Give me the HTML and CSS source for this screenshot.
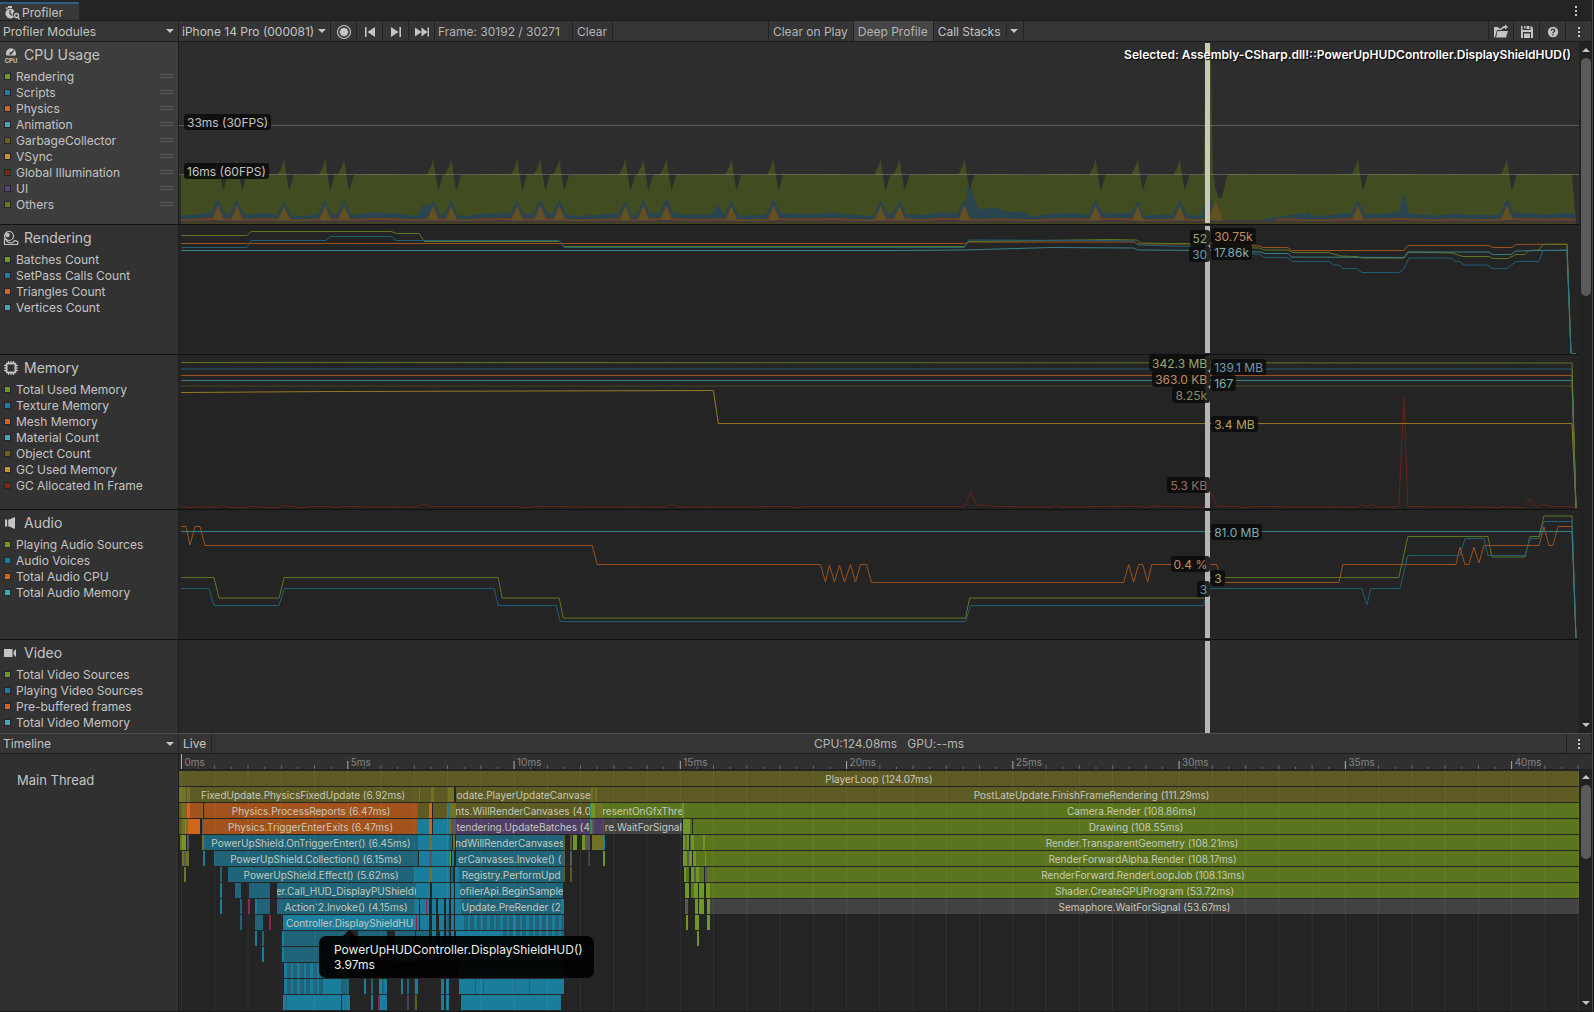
FILE: index.html
```html
<!DOCTYPE html>
<html lang="en">
<head>
    <meta charset="UTF-8">
    <meta name="viewport" content="width=device-width, initial-scale=1.0">
    <title>Profiler</title>
    <link rel="stylesheet" href="styles.css">
</head>
<body>
    <div class="window">
        <header class="tab-bar">
            <div class="tab">
                <svg class="icon" viewBox="0 0 16 16"><path d="M4 1h4v2H4zM1.500 3l1.500-1 1 1-1.500 1.500zM6 3.500a5 5 0 0 1 4.500 3C9 7 8.500 9 9 11l1 1A5 5 0 1 1 6 3.500z"/><path d="M6 5v3.500l2 2" fill="none" stroke="#383838" stroke-width="1.200"/><circle cx="12.500" cy="10.500" r="2" fill="none" stroke="#c4c4c4" stroke-width="1.300"/><path d="M13.500 12l2 2.500" stroke="#c4c4c4" stroke-width="1.300"/></svg>
                <span>Profiler</span>
            </div>
            <button class="kebab" aria-label="Window menu"><i></i><i></i><i></i></button>
        </header>

        <nav class="toolbar">
            <div class="select-box modules-select">
                <select aria-label="Profiler Modules"><option>Profiler Modules</option></select>
            </div>
            <div class="select-box device-select">
                <select aria-label="Target"><option>iPhone 14 Pro (000081)</option></select>
            </div>
            <button class="tool icon-tool" aria-label="Record"><svg class="icon" viewBox="0 0 16 16"><circle cx="8" cy="8" r="6.500" fill="none" stroke="#c4c4c4" stroke-width="1.100"/><circle cx="8" cy="8" r="4.300"/></svg></button>
            <button class="tool icon-tool" aria-label="Previous frame"><svg class="icon" viewBox="0 0 16 16"><path d="M3 3h1.600v10H3zM13 3v10L5.500 8z"/></svg></button>
            <button class="tool icon-tool" aria-label="Next frame"><svg class="icon" viewBox="0 0 16 16"><path d="M11.400 3H13v10h-1.600zM3 3v10l7.500-5z"/></svg></button>
            <button class="tool icon-tool" aria-label="Last frame"><svg class="icon" viewBox="0 0 16 16"><path d="M1 3.500v9L7.500 8zM7.500 3.500v9L13.500 8zM13.500 3.500H15v9h-1.500z"/></svg></button>
            <span class="tool frame">Frame: 30192 / 30271</span>
            <button class="tool">Clear</button>
            <span class="spacer"></span>
            <button class="tool first">Clear on Play</button>
            <button class="tool pressed" aria-pressed="true">Deep Profile</button>
            <button class="tool stacks">Call Stacks</button>
            <button class="tool stacks-menu" aria-label="Call stack options"><b class="arrow down"></b></button>
            <span class="spacer wide"></span>
            <button class="tool icon-tool first" aria-label="Load"><svg class="icon" viewBox="0 0 16 16"><path d="M1 3h4l1 1.500h3V6H4L2 13.500H1zM4.500 7H15l-2 6.500H3zM8 5.500C8.500 3 10 2 12 2V.500L15 3l-3 2.500V4c-1.500 0-2.500.500-3 1.500z"/></svg></button>
            <button class="tool icon-tool" aria-label="Save"><svg class="icon" viewBox="0 0 16 16"><path d="M2 2h1.500v4h8V2H12l2 2v10h-2V8H4v6H2zM5 2h1.500v2.500H5zM7.500 2h3v3h-3zM5 9.500h6V14H5z"/></svg></button>
            <button class="tool icon-tool" aria-label="Help"><svg class="icon" viewBox="0 0 16 16"><circle cx="8" cy="8" r="5.200"/><path d="M6.300 6.800C6.300 4.500 9.800 4.600 9.700 6.600 9.600 7.800 8 7.800 8 9.200M8 10.200v1.300" fill="none" stroke="#353535" stroke-width="1.400"/></svg></button>
            <button class="tool icon-tool kebab" aria-label="Profiler menu"><i></i><i></i><i></i></button>
        </nav>

        <main class="modules">
            <div class="module-list">
                <section class="module cpu">
                    <div class="legend">
                        <h2><svg class="icon" viewBox="0 0 16 16"><path d="M3.500 8.500a5 5 0 1 1 9 0z"/><path d="M8 6.500l3-3" stroke="#3d3d3d" stroke-width="1.200"/><circle cx="7.700" cy="6.500" r="1.300" fill="#3d3d3d"/><text x="8" y="15.500" text-anchor="middle" class="icon-text">CPU</text></svg>CPU Usage</h2>
                        <label><input type="checkbox" class="green" checked>Rendering<i class="grip"></i></label>
                        <label><input type="checkbox" class="blue" checked>Scripts<i class="grip"></i></label>
                        <label><input type="checkbox" class="orange" checked>Physics<i class="grip"></i></label>
                        <label><input type="checkbox" class="cyan" checked>Animation<i class="grip"></i></label>
                        <label><input type="checkbox" class="olive" checked>GarbageCollector<i class="grip"></i></label>
                        <label><input type="checkbox" class="yellow" checked>VSync<i class="grip"></i></label>
                        <label><input type="checkbox" class="red" checked>Global Illumination<i class="grip"></i></label>
                        <label><input type="checkbox" class="violet" checked>UI<i class="grip"></i></label>
                        <label><input type="checkbox" class="moss" checked>Others<i class="grip"></i></label>
                    </div>
                    <div class="chart">
                        <svg class="plot" id="cpu-plot" viewBox="179 42 1399 182" preserveAspectRatio="none"></svg>
                        <span class="fps fps-30">33ms (30FPS)</span>
                        <span class="fps fps-60">16ms (60FPS)</span>
                        <div class="marker"></div>
                        <span class="selected">Selected: Assembly-CSharp.dll!::PowerUpHUDController.DisplayShieldHUD()</span>
                    </div>
                </section>

                <section class="module rendering">
                    <div class="legend">
                        <h2><svg class="icon" viewBox="0 0 16 16"><circle cx="6" cy="6" r="4.500" fill="none" stroke="#c4c4c4" stroke-width="1.200"/><circle cx="4.500" cy="5" r="2.200"/><path d="M1.500 9v5.500h13l.500-2.500c-2-1-3.500-2-4-1l-1 1.500c-3 1-6 0-7-3.500z" fill="none" stroke="#c4c4c4" stroke-width="1.200"/></svg>Rendering</h2>
                        <label><input type="checkbox" class="green" checked>Batches Count</label>
                        <label><input type="checkbox" class="blue" checked>SetPass Calls Count</label>
                        <label><input type="checkbox" class="orange" checked>Triangles Count</label>
                        <label><input type="checkbox" class="cyan" checked>Vertices Count</label>
                    </div>
                    <div class="chart">
                        <svg class="plot" viewBox="179 225 1399 129" preserveAspectRatio="none">
                            <polyline class="line-orange" points="181,243.500 964,243.500 968,242 1133,242 1137,244 1205,244 1210,243 1259,246 1262,247.500 1287,247.500 1291,250.500 1403,250.500 1407,245.500 1488,245.500 1492,247.500 1511,247.500 1515,244.500 1566,244 1570,353"/>
                            <polyline class="line-green" points="181,235.500 247,235.500 251,231.500 391,231.500 396,233.500 419,233.500 424,241.500 559,241.500 564,246.500 964,246.500 968,241.500 1110,239.500 1136,240 1140,243 1205,244 1210,247 1259,248 1263,250 1287,250 1292,252.500 1328,252.500 1340,256 1356,256.500 1361,258 1403,258 1407,252 1451,253 1462,256.500 1488,256.500 1492,258.500 1507,258.500 1515,254.500 1524,254.500 1528,250.500 1538,250 1542,244.500 1566,244.500 1570,353"/>
                            <polyline class="line-blue" points="181,247.500 247,247.500 251,240.500 326,240.500 330,236.500 391,236.500 396,240.500 559,240.500 564,247.500 964,247.500 968,240 1110,240.500 1133,241 1137,245 1205,247 1210,250 1259,254.500 1263,257.500 1287,257.500 1291,261.500 1328,261.500 1333,265 1338,265 1342,268.500 1356,268.500 1361,272.500 1398,272.500 1403,269 1408,258 1450,258 1454,261 1459,261.500 1463,265 1487,265 1491,268.500 1506,268.500 1515,261.500 1538,261.500 1542,250.500 1566,250.500 1570,353"/>
                            <polyline class="line-cyan" points="181,250.500 900,250.500 964,250 1050,247.500 1133,248 1137,250 1210,250.500 1260,252 1264,253.500 1287,253.500 1291,257 1403,257.500 1408,252 1488,252 1492,254.500 1510,254.500 1515,251 1566,250 1570,353.500 1575,353.500"/>
                        </svg>
                        <div class="marker" data-values="rendering"></div>
                    </div>
                </section>

                <section class="module memory">
                    <div class="legend">
                        <h2><svg class="icon" viewBox="0 0 16 16"><rect x="3.500" y="3.500" width="9" height="9" rx="1" fill="none" stroke="#c4c4c4" stroke-width="2"/><path d="M5.500 1v2M8 1v2M10.500 1v2M5.500 13v2M8 13v2M10.500 13v2M1 5.500h2M1 8h2M1 10.500h2M13 5.500h2M13 8h2M13 10.500h2" stroke="#c4c4c4" stroke-width="1.200"/></svg>Memory</h2>
                        <label><input type="checkbox" class="green" checked>Total Used Memory</label>
                        <label><input type="checkbox" class="blue" checked>Texture Memory</label>
                        <label><input type="checkbox" class="orange" checked>Mesh Memory</label>
                        <label><input type="checkbox" class="cyan" checked>Material Count</label>
                        <label><input type="checkbox" class="olive" checked>Object Count</label>
                        <label><input type="checkbox" class="yellow" checked>GC Used Memory</label>
                        <label><input type="checkbox" class="red" checked>GC Allocated In Frame</label>
                    </div>
                    <div class="chart">
                        <svg class="plot" viewBox="179 355 1399 154" preserveAspectRatio="none">
                            <polyline class="line-red" points="181,506.500 186,506.500 190,508 195,506.500 218,507 223,505 228,507 245,508 251,506 275,508 284,505.500 298,507 303,508 308,506.500 330,506.500 336,508 341,506.500 415,507 424,504 430,506.500 520,506.500 526,508 532,506.500 664,507 671,504.500 678,507 790,506.500 796,508 802,506.500 964,506.500 970,492 976,505 1000,506.500 1050,507 1056,505.500 1062,507 1140,506 1146,508 1151,506 1203,507 1210,492 1216,506 1240,506.500 1244,508 1250,506.500 1355,507 1361,505 1366,507 1371,504.500 1378,507 1398,506.500 1403,397 1407,506.500 1460,507 1464,505 1468,507 1491,507 1496,508 1502,506.500 1524,507.500 1529,499 1534,506 1538,506 1543,504.500 1550,506.500 1571,506.500 1575,508"/>
                            <polyline class="line-olive" points="181,386 1571,386 1575,508"/>
                            <polyline class="line-yellow" points="181,392.500 330,391.500 713,390.500 718,423.500 1571,423.500 1575,508"/>
                            <polyline class="line-blue" points="181,369 1571,369 1575,508"/>
                            <polyline class="line-orange" points="181,375.500 1571,375.500 1575,508"/>
                            <polyline class="line-cyan" points="181,380.500 1571,380.500 1575,508"/>
                            <polyline class="line-green" points="181,362.500 1571,363 1575,508"/>
                        </svg>
                        <div class="marker" data-values="memory"></div>
                    </div>
                </section>

                <section class="module audio">
                    <div class="legend">
                        <h2><svg class="icon" viewBox="0 0 16 16"><path d="M2 4.500h2.200v7H2zM5.200 4.500h1L12 2v12l-5.800-2.500h-1z"/></svg>Audio</h2>
                        <label><input type="checkbox" class="green" checked>Playing Audio Sources</label>
                        <label><input type="checkbox" class="blue" checked>Audio Voices</label>
                        <label><input type="checkbox" class="orange" checked>Total Audio CPU</label>
                        <label><input type="checkbox" class="cyan" checked>Total Audio Memory</label>
                    </div>
                    <div class="chart">
                        <svg class="plot" viewBox="179 510 1399 129" preserveAspectRatio="none">
                            <polyline class="line-orange" points="181,526.500 186,526.500 190,545 195,526.500 200,526.500 205,545.500 592,545.500 597,564.500 820,564.500 825,582 829,565 834,582 839,565 844,582 850,564.500 855,582 860,564.500 866,564.500 871,582.500 1123,582.500 1128,564.500 1133,582 1138,564.500 1142,564.500 1147,582 1151,564.500 1216,564.500 1221,582.500 1338,582.500 1342,564.500 1455,564.500 1459,547 1464,564.500 1468,564.500 1473,547 1478,563 1483,545.500 1538,545.500 1543,527 1548,545.500 1552,545.500 1557,526.500 1571,526.500 1575,638"/>
                            <polyline class="line-green" points="181,577.500 214,577.500 219,598 279,598 284,577.500 498,577.500 502,598 559,598 563,618 965,618 969,598 1203,598 1207,577.500 1398,577.500 1407,536.500 1487,536.500 1491,557 1524,557 1529,536.500 1538,536.500 1543,516 1571,516 1575,638"/>
                            <polyline class="line-blue" points="181,588.500 209,588.500 214,605.500 279,605.500 284,588.500 494,588.500 498,605.500 556,605.500 560,621.500 965,621.500 970,605.500 1203,605.500 1207,588.500 1361,588.500 1366,605 1370,588.500 1399,588.500 1407,555.500 1459,555.500 1464,538.500 1483,538.500 1487,555.500 1524,555.500 1529,538.500 1538,538.500 1543,521.500 1571,521.500 1575,638"/>
                            <polyline class="line-cyan" points="181,531.500 1571,531.500 1575,638"/>
                        </svg>
                        <div class="marker" data-values="audio"></div>
                    </div>
                </section>

                <section class="module video">
                    <div class="legend">
                        <h2><svg class="icon" viewBox="0 0 16 16"><path d="M1 4h8.500v8H1zM10.500 6.500L13 4v8l-2.500-2.500z"/></svg>Video</h2>
                        <label><input type="checkbox" class="green" checked>Total Video Sources</label>
                        <label><input type="checkbox" class="blue" checked>Playing Video Sources</label>
                        <label><input type="checkbox" class="orange" checked>Pre-buffered frames</label>
                        <label><input type="checkbox" class="cyan" checked>Total Video Memory</label>
                    </div>
                    <div class="chart"><div class="marker"></div></div>
                </section>
            </div>
            <div class="scrollbar modules-scroll"><b class="arrow up"></b><i class="thumb"></i><b class="arrow down"></b></div>
        </main>

        <nav class="toolbar details-bar">
            <div class="select-box modules-select">
                <select aria-label="Details view"><option>Timeline</option></select>
            </div>
            <button class="tool">Live</button>
            <span class="timing">CPU:124.08ms&nbsp;&nbsp; GPU:--ms</span>
            <button class="tool icon-tool first kebab" aria-label="Timeline menu"><i></i><i></i><i></i></button>
        </nav>

        <section class="timeline">
            <div class="threads">Main Thread</div>
            <div class="track">
                <svg class="ruler" id="ruler"></svg>
                <div class="flame">
                    <svg class="gridlines" id="gridlines"></svg>
                    <div id="flame-rows"></div>
                    <div class="tooltip">PowerUpHUDController.DisplayShieldHUD()<br>3.97ms</div>
                </div>
            </div>
            <div class="scroll-column">
                <div class="scrollbar timeline-scroll"><b class="arrow up"></b><i class="thumb"></i><b class="arrow down"></b></div>
            </div>
        </section>
    </div>
    <script src="script.js"></script>
</body>
</html>
```
FILE: styles.css
```css
* {
    box-sizing: border-box;
}
body {
    margin: 0;
    height: 100vh;
    padding-right: 1px;
    background: #141414;
    color: #c4c4c4;
    font: 12px/16px Inter, "Liberation Sans", sans-serif;
    overflow: hidden;
}
.window {
    display: flex;
    flex-direction: column;
    height: 100%;
    background: #242424;
    border-right: 1px solid #484848;
    border-bottom: 1px solid #191919;
}
button,
select {
    font: inherit;
    color: inherit;
    background: none;
    border: none;
    border-radius: 0;
    padding: 0;
    margin: 0;
}
.icon {
    width: 16px;
    height: 16px;
    fill: #c4c4c4;
    flex: none;
}
.icon-text {
    font-size: 6px;
    font-weight: 700;
}

/* tab bar */
.tab-bar {
    display: flex;
    justify-content: space-between;
    height: 21px;
    padding-top: 2px;
    border-bottom: 1px solid #1e1e1e;
}
.tab {
    display: flex;
    align-items: center;
    gap: 2px;
    width: 79px;
    padding: 2px 0 0 4px;
    background: #383838;
    border-top: 2px solid #2c5d87;
}
.kebab {
    display: flex;
    flex-direction: column;
    align-items: center;
    justify-content: center;
    gap: 2px;
    width: 32px;
}
.kebab i {
    width: 2px;
    height: 2px;
    background: #c4c4c4;
}

/* toolbars */
.toolbar {
    display: flex;
    flex: none;
    height: 21px;
    background: #353535;
    border-bottom: 1px solid #1c1c1c;
}
.select-box {
    position: relative;
    border-right: 1px solid #222;
}
.select-box select {
    appearance: none;
    width: 100%;
    height: 20px;
    padding: 2px 14px 0 3px;
}
.select-box::after {
    content: "";
    position: absolute;
    right: 4px;
    top: 8px;
    border: 4px solid transparent;
    border-top-color: #c4c4c4;
    border-bottom: none;
    pointer-events: none;
}
.modules-select {
    width: 179px;
}
.device-select {
    width: 152px;
}
.tool {
    display: flex;
    align-items: center;
    justify-content: center;
    padding: 2px 5px 0 4px;
    border-right: 1px solid #222;
    color: #b4b4b4;
    white-space: nowrap;
}
.tool.first {
    border-left: 1px solid #222;
}
.icon-tool {
    width: 26px;
    padding: 1px 0 0;
}
.frame {
    justify-content: flex-start;
    width: 138px;
    padding: 2px 3px 0;
}
.pressed {
    background: #464646;
}
.stacks {
    border-right: none;
    color: #c4c4c4;
}
.stacks-menu {
    width: 18px;
    padding: 0;
    background: linear-gradient(#222, #222) 0 4px / 1px 12px no-repeat;
}
.spacer {
    flex: 1;
}
.spacer.wide {
    flex: 3;
}
.arrow {
    flex: none;
    width: 0;
    height: 0;
    border: 4px solid transparent;
}
.arrow.down {
    border-top: 4px solid #c4c4c4;
    border-bottom: none;
}
.arrow.up {
    border-bottom: 4px solid #c4c4c4;
    border-top: none;
}

/* scrollbars */
.scrollbar {
    display: flex;
    flex-direction: column;
    align-items: center;
    flex: none;
    width: 13px;
    padding: 6px 0;
    background: #222;
}
.scrollbar .down {
    margin-top: auto;
}
.thumb {
    width: 10px;
    height: 35%;
    margin-top: 6px;
    border-radius: 5px;
    background: #5a5a5a;
}

/* modules */
.modules {
    display: flex;
    flex: 691 1 0;
    min-height: 0;
}
.module-list {
    flex: 1;
    min-width: 0;
    overflow: hidden;
}
.module {
    display: grid;
    grid-template-columns: 179px 1fr;
    border-bottom: 1px solid #111;
    background: #242424;
}
.cpu {
    height: 183px;
    background: #2d2d2d;
}
.rendering,
.audio,
.video {
    height: 130px;
}
.memory {
    height: 155px;
}
.video {
    background: #292929;
}
.legend {
    background: #323232;
    border-right: 1px solid #1e1e1e;
}
.cpu .legend {
    background: #3d3d3d;
}
.legend h2 {
    display: flex;
    align-items: center;
    gap: 5px;
    height: 26px;
    margin: 0;
    padding-left: 3px;
    font-size: 14px;
    font-weight: 400;
}
.legend label {
    display: flex;
    height: 16px;
    padding: 0 4px;
    line-height: 18px;
}
.legend input {
    appearance: none;
    width: 7px;
    height: 7px;
    margin: 5px 5px 0 0;
    border: 1px solid #262626;
}
.grip {
    width: 14px;
    height: 4px;
    margin: 6px 0 0 auto;
    border: solid #5c5c5c;
    border-width: 1px 0;
}
.green { background: #73991f; }
.blue { background: #1a7e9f; }
.orange { background: #d0681c; }
.cyan { background: #41a7b0; }
.olive { background: #67611b; }
.yellow { background: #c09a24; }
.red { background: #832312; }
.violet { background: #5b4380; }
.moss { background: #707423; }

.chart {
    position: relative;
    min-width: 0;
}
.plot {
    display: block;
    width: 100%;
    height: 100%;
}
.plot polyline {
    fill: none;
    stroke-width: 1;
    vector-effect: non-scaling-stroke;
}
.line-green { stroke: #5b7821; }
.line-blue { stroke: #205f77; }
.line-orange { stroke: #9c531f; }
.line-cyan { stroke: #378089; }
.line-olive { stroke: #4c4622; }
.line-yellow { stroke: #957a24; }
.line-red { stroke: #672318; }
.area-green { fill: #414c21; }
.area-blue { fill: #294650; }
.area-orange { fill: #6c3f1f; }
.area-yellow { fill: #605222; }
.area-violet { fill: #42344a; }
.area-moss { fill: #424120; }
.guide {
    stroke: rgba(255, 255, 255, 0.22);
}
.marker {
    position: absolute;
    top: 1px;
    bottom: 1px;
    left: 73.3%;
    width: 5px;
    background: #b6b6b6;
}
.cpu .marker {
    background: #c7cab6;
}
.fps,
.value {
    position: absolute;
    height: 16px;
    padding: 0 3px;
    border-radius: 3px;
    background: rgba(10, 10, 10, 0.85);
    line-height: 18px;
    white-space: nowrap;
}
.fps {
    left: 5px;
}
.fps-30 {
    top: 72px;
}
.fps-60 {
    top: 121px;
}
.value.before {
    right: 0;
}
.value.after {
    left: 6px;
}
.text-green { color: #98a66d; }
.text-blue { color: #6f98a8; }
.text-orange { color: #c18c5f; }
.text-cyan { color: #80adb0; }
.text-olive { color: #8c8a68; }
.text-yellow { color: #b5a35d; }
.text-red { color: #9c6a62; }
.selected {
    position: absolute;
    top: 5px;
    right: 8px;
    color: #fff;
    font-weight: 600;
    text-shadow: 1px 1px 1px #000;
    white-space: nowrap;
}

/* details */
.details-bar {
    border-top: 1px solid #4f4f4f;
}
.details-bar select,
.details-bar .tool {
    padding-top: 0;
    color: #c4c4c4;
}
.timing {
    flex: 1;
    text-align: center;
    line-height: 19px;
    white-space: pre;
    color: #b4b4b4;
}
.timeline {
    display: grid;
    grid-template-columns: 179px 1fr 13px;
    flex: 257 1 0;
    min-height: 0;
    background: #222;
}
.threads {
    padding: 18px 17px;
    background: #303030;
    border-right: 1px solid #1e1e1e;
    font-size: 13px;
}
.track {
    display: flex;
    flex-direction: column;
    min-width: 0;
    min-height: 0;
}
.ruler {
    flex: none;
    width: 100%;
    height: 16px;
    background: #303030;
    border-bottom: 1px solid #222;
}
.ruler text {
    fill: #858585;
    font-size: 10px;
}
.ruler line {
    stroke: #6a6a6a;
}
.ruler .major {
    stroke: #b0b0b0;
}
.flame {
    position: relative;
    flex: 1;
    min-height: 0;
    padding-top: 1px;
    background: #242424;
}
.gridlines {
    position: absolute;
    inset: 0;
    width: 100%;
    height: 100%;
    pointer-events: none;
}
.gridlines line {
    stroke: rgba(255, 255, 255, 0.06);
}
.row {
    display: flex;
    height: 15px;
    margin-bottom: 1px;
}
.bar {
    display: flex;
    justify-content: center;
    flex: none;
    overflow: hidden;
    color: #c6c9bd;
    font-size: 10px;
    line-height: 17px;
    white-space: nowrap;
}
.bar-o { background: #5d5a24; }
.bar-m { background: #717226; }
.bar-g { background: #5a751e; }
.bar-G { background: #6f9724; }
.bar-e { background: #2f8c62; }
.bar-r { background: #a3521b; }
.bar-R { background: #d1671d; }
.bar-b { background: #1f6478; }
.bar-B { background: #1b7d9c; }
.bar-k { background: #424242; }
.bar-K { background: #585858; }
.bar-p { background: #4f3d66; }
.bar-x { background: #8e2450; }
.bar-s {
    background: repeating-linear-gradient(90deg, #1b7d9c 0 3px, #1f6478 3px 7px, #1b7d9c 7px 9px, #1f6478 9px 13px);
}
.tooltip {
    position: absolute;
    top: 166px;
    left: 140px;
    padding: 6px 11px 6px 15px;
    border-radius: 7px;
    background: rgba(0, 0, 0, 0.93);
    color: #f0f0f0;
    font-size: 12px;
    line-height: 15px;
    white-space: nowrap;
}
.tooltip::before {
    content: "";
    position: absolute;
    top: -6px;
    left: 24px;
    border: 6px solid transparent;
    border-bottom-color: rgba(0, 0, 0, 0.93);
    border-top: none;
}
.scroll-column {
    display: flex;
    padding-top: 15px;
    background: #303030;
}
.timeline-scroll {
    padding: 6px 0;
}
.timeline-scroll .thumb {
    height: 32%;
}
```
FILE: script.js
```js
const ORIGIN = 179;
const SPAN = 1399;
const SVG_NS = 'http://www.w3.org/2000/svg';

function svgNode(parent, name, attrs) {
    const node = document.createElementNS(SVG_NS, name);
    Object.keys(attrs).forEach(key => node.setAttribute(key, attrs[key]));
    parent.appendChild(node);
    return node;
}

// linear interpolation through a list of [x, y] keys
function sample(keys, x) {
    for (let i = 1; i < keys.length; i++) {
        if (x <= keys[i][0]) {
            const [x0, y0] = keys[i - 1];
            const [x1, y1] = keys[i];
            return y0 + (y1 - y0) * (x - x0) / (x1 - x0);
        }
    }
    return keys[keys.length - 1][1];
}

// CPU usage areas
const spikes = [218, 237, 284, 325, 344, 433, 451, 517, 540, 559, 625, 643, 666, 731, 773, 880, 899, 964, 1095, 1137, 1179, 1357, 1506];

function peak(x, center, half, height) {
    return Math.max(0, 1 - Math.abs(x - center) / half) * height;
}

function wobble(x, size) {
    return (Math.sin(x / 9) + Math.sin(x / 23 + 1) + Math.sin(x / 4.3) * 0.4) * size;
}

function cpuTop(x) {
    if (x >= 1203 && x <= 1227) {
        return sample([[1203, 174], [1205, 43], [1210, 43], [1212, 170], [1215, 190], [1218, 198], [1221, 198], [1227, 174]], x);
    }
    let y = 174.5 + wobble(x, 0.25);
    spikes.forEach(s => {
        if (x > s - 6 && x < s + 10) {
            y = sample([[s - 6, 174], [s - 2, 166], [s, 159], [s + 2, 172], [s + 5, 191], [s + 10, 174]], x);
        }
    });
    return x > 1571 ? sample([[1571, 174], [1575, 223]], x) : y;
}

function scriptsTop(x) {
    let y = 214 + wobble(x, 0.9);
    if (x > 966 && x < 1032) {
        y = sample([[966, 192], [969, 182], [974, 200], [979, 210], [985, 208], [998, 208], [1006, 212], [1022, 211], [1031, 217]], x);
    }
    if (x > 1215 && x < 1310) {
        y = sample([[1215, 200], [1221, 222], [1250, 222], [1275, 217], [1310, 212]], x);
    }
    spikes.forEach(s => { y -= peak(x, s, 7, 14); });
    y -= peak(x, 424, 7, 11) + peak(x, 717, 6, 9) + peak(x, 1403, 5, 20) + peak(x, 1208, 8, 20);
    return y;
}

function physicsTop(x) {
    if (x > 1221 && x < 1275) return 222;
    let y = 218.5 + wobble(x, 0.4);
    spikes.forEach(s => { y -= peak(x, s, 6, 13); });
    return y - peak(x, 1215, 8, 18);
}

function vsyncTop(x) {
    if (x > 1221 && x < 1275) return 222;
    let y = 220;
    spikes.forEach(s => { y -= peak(x, s, 5, 14); });
    return y - peak(x, 1215, 7, 19);
}

function drawArea(plot, name, topAt) {
    let points = '181,224 ';
    for (let x = 181; x <= 1575; x += 1) {
        const y = Math.min(223, Math.max(topAt(x), cpuTop(x)));
        points += x + ',' + y.toFixed(1) + ' ';
    }
    svgNode(plot, 'polygon', { class: name, points: points + '1575,224' });
}

const cpuPlot = document.getElementById('cpu-plot');
drawArea(cpuPlot, 'area-green', cpuTop);
drawArea(cpuPlot, 'area-blue', scriptsTop);
drawArea(cpuPlot, 'area-orange', physicsTop);
drawArea(cpuPlot, 'area-yellow', vsyncTop);
drawArea(cpuPlot, 'area-violet', x => 220.5 + wobble(x, 0.2));
drawArea(cpuPlot, 'area-moss', () => 222);
[125.5, 174.5].forEach(y => svgNode(cpuPlot, 'line', { class: 'guide', x1: 179, x2: 1578, y1: y, y2: y }));

// values next to the selected frame: side, top, colour, text
const values = {
    rendering: [
        ['before', 5, 'green', '52'], ['before', 21, 'blue', '30'],
        ['after', 3, 'orange', '30.75k'], ['after', 19, 'cyan', '17.86k']
    ],
    memory: [
        ['before', 0, 'green', '342.3 MB'], ['before', 16, 'orange', '363.0 KB'], ['before', 32, 'olive', '8.25k'],
        ['after', 4, 'blue', '139.1 MB'], ['after', 20, 'cyan', '167'],
        ['after', 61, 'yellow', '3.4 MB'], ['before', 122, 'red', '5.3 KB']
    ],
    audio: [
        ['after', 14, 'cyan', '81.0 MB'], ['before', 46, 'orange', '0.4 %'],
        ['after', 60, 'green', '3'], ['before', 71, 'blue', '3']
    ]
};

document.querySelectorAll('.marker[data-values]').forEach(marker => {
    values[marker.dataset.values].forEach(([side, top, color, text]) => {
        const tag = document.createElement('span');
        tag.className = 'value ' + side + ' text-' + color;
        tag.style.top = top - 1 + 'px';
        tag.textContent = text;
        marker.appendChild(tag);
    });
});

// Time ruler and grid
const ruler = document.getElementById('ruler');
const gridlines = document.getElementById('gridlines');
const MS = 33.23;

for (let half = 0; half <= 84; half++) {
    const x = ((2.5 + half / 2 * MS) / SPAN * 100).toFixed(3) + '%';
    const major = half % 10 === 0;
    const length = major ? 8 : half % 2 === 0 ? 4 : 2;
    svgNode(ruler, 'line', { class: major ? 'major' : 'minor', x1: x, x2: x, y1: half === 0 ? 0 : 15 - length, y2: 15 });
    if (major) {
        svgNode(ruler, 'text', { x: x, dx: 3, y: 12 }).textContent = half / 2 + 'ms';
    }
    if (half % 2 === 0) {
        svgNode(gridlines, 'line', { x1: x, x2: x, y1: 0, y2: '100%' });
    }
}

// Flame rows: start, end, colour, label
const rows = [
    [[179, 1578, 'o', 'PlayerLoop (124.07ms)']],
    [[179, 186, 'm'], [186, 187, 'o'], [187, 190, 'm'], [190, 416, 'o', 'FixedUpdate.PhysicsFixedUpdate (6.92ms)'], [416, 419, 'o'], [419, 420, 'm'], [420, 431, 'o'], [431, 434, 'm'], [434, 448, 'o'], [448, 454, 'm'], [456, 591, 'o', 'odate.PlayerUpdateCanvase'], [591, 593, 'm'], [593, 595, 'o'], [595, 597, 'm'], [597, 604, 'o'], [604, 1578, 'o', 'PostLateUpdate.FinishFrameRendering (111.29ms)']],
    [[179, 182, 'o'], [182, 185, 'm'], [185, 187, 'r'], [187, 190, 'R'], [190, 201, 'r'], [201, 203, 'm'], [204, 418, 'r', 'Physics.ProcessReports (6.47ms)'], [418, 429, 'o'], [429, 432, 'R'], [433, 447, 'o'], [447, 450, 'B'], [450, 456, 'm'], [456, 590, 'o', 'nts.WillRenderCanvases (4.0'], [590, 591, 'e'], [591, 595, 'G'], [595, 603, 'm'], [603, 682, 'g', 'resentOnGfxThre'], [682, 684, 'G'], [684, 1578, 'g', 'Camera.Render (108.86ms)']],
    [[179, 182, 'o'], [182, 185, 'm'], [185, 186, 'R'], [186, 188, 'm'], [188, 200, 'R'], [202, 203, 'K'], [203, 418, 'r', 'Physics.TriggerEnterExits (6.47ms)'], [418, 429, 'B'], [429, 432, 'R'], [433, 449, 'B'], [449, 451, 'm'], [451, 456, 'K'], [456, 590, 'p', 'tendering.UpdateBatches (4'], [590, 592, 'e'], [592, 594, 'K'], [594, 603, 'p'], [603, 604, 'b'], [604, 682, 'k', 're.WaitForSignal'], [683, 690, 'G'], [690, 692, 'g'], [693, 1578, 'g', 'Drawing (108.55ms)']],
    [[180, 182, 'm'], [182, 186, 'G'], [187, 189, 'K'], [202, 204, 'm'], [204, 418, 'b', 'PowerUpShield.OnTriggerEnter() (6.45ms)'], [418, 429, 'B'], [429, 432, 'm'], [432, 449, 'B'], [449, 452, 'b'], [453, 455, 'm'], [456, 563, 'b', 'ndWillRenderCanvases'], [563, 565, 'o'], [570, 572, 'o'], [573, 577, 'G'], [582, 585, 'G'], [585, 590, 'K'], [592, 604, 'm'], [604, 605, 'B'], [683, 685, 'G'], [685, 687, 'g'], [687, 689, 'G'], [690, 691, 'K'], [691, 694, 'G'], [694, 703, 'g'], [703, 705, 'G'], [705, 1578, 'g', 'Render.TransparentGeometry (108.21ms)']],
    [[182, 184, 'm'], [184, 186, 'K'], [186, 189, 'm'], [203, 205, 'B'], [214, 418, 'b', 'PowerUpShield.Collection() (6.15ms)'], [419, 429, 'B'], [429, 432, 'K'], [432, 450, 'B'], [450, 451, 'G'], [452, 454, 'B'], [456, 563, 'b', 'erCanvases.Invoke() ('], [563, 565, 'K'], [570, 572, 'K'], [588, 590, 'k'], [603, 605, 'G'], [683, 687, 'G'], [687, 689, 'K'], [689, 692, 'G'], [693, 696, 'G'], [696, 705, 'g'], [705, 706, 'G'], [706, 1578, 'g', 'RenderForwardAlpha.Render (108.17ms)']],
    [[184, 186, 'm'], [220, 222, 'b'], [228, 414, 'b', 'PowerUpShield.Effect() (5.62ms)'], [414, 429, 'B'], [429, 432, 'm'], [432, 450, 'B'], [451, 453, 'b'], [455, 459, 'B'], [459, 563, 'b', 'Registry.PerformUpd'], [563, 565, 'o'], [570, 572, 'o'], [684, 686, 'G'], [686, 689, 'g'], [691, 694, 'G'], [694, 696, 'K'], [696, 699, 'G'], [699, 704, 'g'], [705, 707, 'K'], [707, 1578, 'g', 'RenderForward.RenderLoopJob (108.13ms)']],
    [[220, 222, 'B'], [235, 241, 'b'], [249, 270, 'b'], [277, 416, 'b', 'er.Call_HUD_DisplayPUShield('], [416, 430, 'B'], [432, 450, 'B'], [451, 454, 'B'], [455, 460, 'B'], [460, 563, 'b', 'ofilerApi.BeginSample'], [685, 689, 'G'], [691, 694, 'g'], [694, 698, 'G'], [699, 704, 'G'], [706, 710, 'G'], [710, 1578, 'g', 'Shader.CreateGPUProgram (53.72ms)']],
    [[220, 222, 'B'], [240, 242, 'b'], [248, 250, 'x'], [255, 257, 'B'], [257, 270, 'b'], [277, 415, 'b', 'Action`2.Invoke() (4.15ms)'], [415, 419, 'B'], [420, 426, 'B'], [426, 427, 'x'], [427, 429, 'B'], [432, 436, 'B'], [438, 444, 'B'], [446, 449, 'B'], [451, 454, 'B'], [455, 461, 'B'], [461, 561, 'b', 'Update.PreRender (2'], [561, 564, 'B'], [685, 688, 'K'], [695, 698, 'G'], [699, 704, 'G'], [707, 710, 'G'], [710, 1578, 'k', 'Semaphore.WaitForSignal (53.67ms)']],
    [[240, 242, 'b'], [255, 263, 'b'], [269, 271, 'x'], [283, 416, 'B', 'Controller.DisplayShieldHU'], [416, 417, 'x'], [417, 419, 'B'], [420, 429, 'B'], [432, 436, 'B'], [439, 444, 'B'], [446, 449, 'b'], [451, 454, 'B'], [455, 461, 'B'], [461, 564, 's'], [686, 688, 'G'], [695, 699, 'G'], [707, 710, 'G']],
    [[255, 257, 'B'], [262, 264, 'b'], [282, 284, 'B'], [284, 350, 'b'], [358, 377, 'b'], [377, 378, 'x'], [378, 387, 'b'], [395, 415, 'b'], [416, 429, 'b'], [432, 436, 'B'], [440, 444, 'B'], [446, 449, 'b'], [451, 454, 'B'], [456, 500, 'B'], [500, 564, 's'], [697, 699, 'G']],
    [[262, 264, 'B'], [282, 284, 'B'], [284, 350, 'b'], [395, 415, 'b'], [432, 436, 'b'], [456, 564, 'b']],
    [[284, 349, 's'], [459, 564, 'b']],
    [[284, 325, 's'], [325, 341, 'B'], [341, 349, 'b'], [364, 366, 'B'], [371, 373, 'b'], [379, 382, 'B'], [382, 384, 'b'], [384, 387, 'B'], [401, 403, 'B'], [407, 409, 'b'], [415, 418, 'B'], [441, 444, 'B'], [446, 449, 'B'], [459, 475, 'B'], [475, 476, 'b'], [476, 483, 'B'], [483, 484, 'b'], [484, 514, 'B'], [514, 515, 'b'], [515, 529, 'B'], [529, 530, 'b'], [530, 564, 'B']],
    [[283, 286, 'B'], [286, 287, 'b'], [287, 341, 'B'], [342, 350, 'B'], [371, 373, 'B'], [378, 380, 'x'], [380, 387, 'B'], [407, 409, 'p'], [415, 417, 'o'], [441, 444, 'B'], [446, 449, 'B'], [461, 561, 'B']]
];

const flame = document.getElementById('flame-rows');
rows.forEach(bars => {
    const row = document.createElement('div');
    row.className = 'row';
    let cursor = ORIGIN;
    bars.forEach(([start, end, color, label]) => {
        const bar = document.createElement('div');
        bar.className = 'bar bar-' + color;
        bar.style.marginLeft = (start - cursor) / SPAN * 100 + '%';
        bar.style.width = (end - start) / SPAN * 100 + '%';
        bar.textContent = label || '';
        row.appendChild(bar);
        cursor = end;
    });
    flame.appendChild(row);
});
```
